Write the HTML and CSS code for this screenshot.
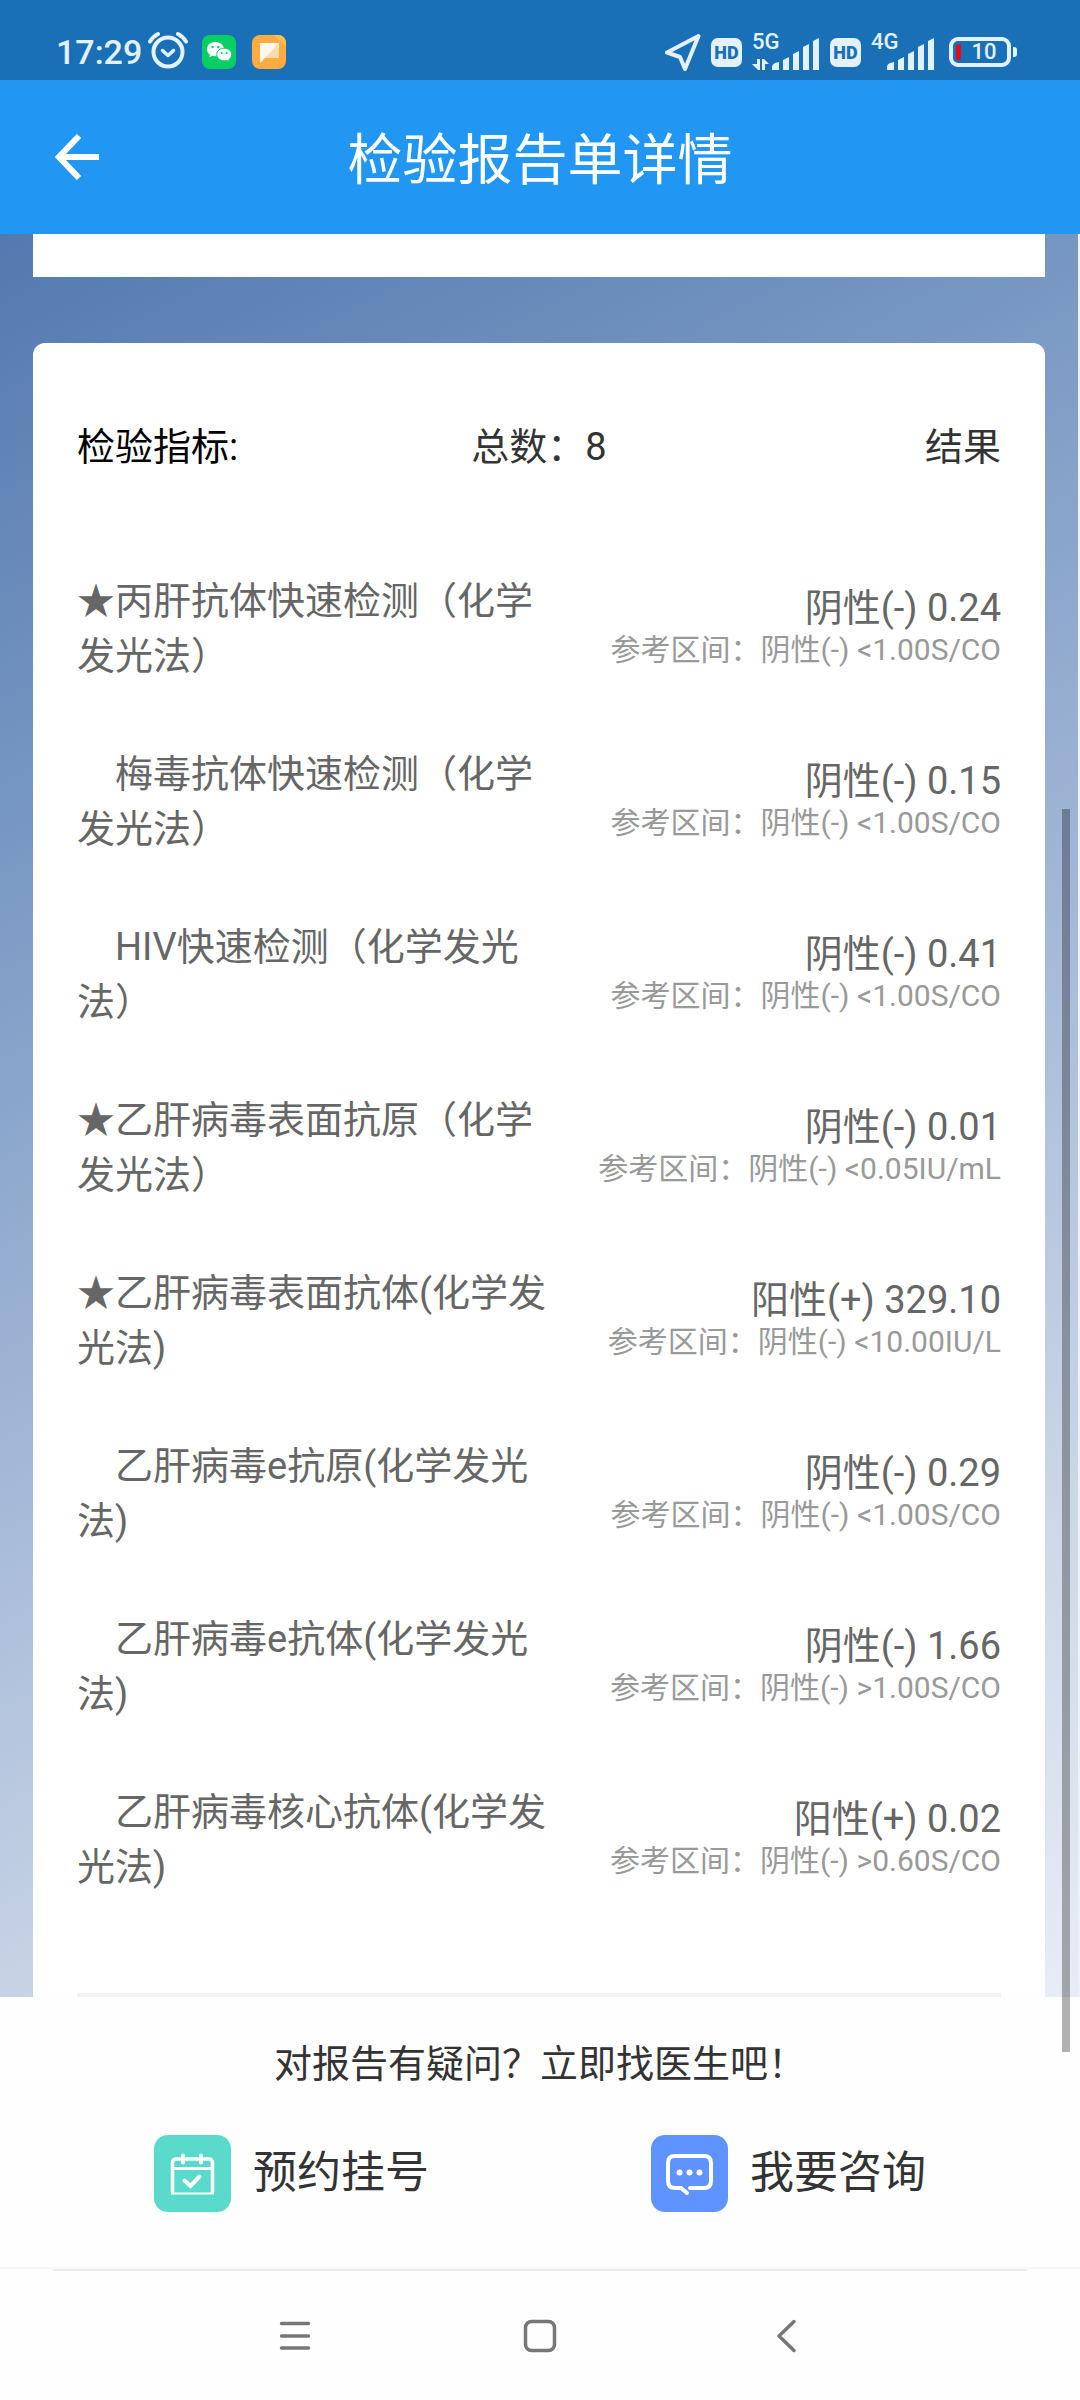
FILE: index.html
```html
<!DOCTYPE html>
<html lang="zh-CN">

<head>
    <meta charset="UTF-8">
    <meta name="viewport" content="width=device-width, initial-scale=1.0">
    <title>检验报告单详情</title>
    <link rel="stylesheet" href="styles.css">
</head>

<body>
    <!-- Status bar -->
    <div class="status-bar">
        <div class="status-left">
            <span class="clock">17:29</span>
            <svg class="alarm" width="40" height="40" viewBox="0 0 40 40" fill="none" stroke="#e3f1fd" stroke-linecap="round">
                <circle cx="20" cy="22" r="14.5" stroke-width="4" />
                <path d="M14.500 20.500l5.500 5 5.500-5" stroke-width="3.500" stroke-linejoin="round" />
                <path d="M2 11.500Q5 6.500 10 4M38 11.500Q35 6.500 30 4" stroke-width="4" />
            </svg>
            <svg class="app-icon" width="34" height="34" viewBox="0 0 34 34">
                <rect width="34" height="34" rx="8" fill="#07cf63" />
                <path d="M13.500 7C8.500 7 5 10.200 5 14.200c0 2.300 1.200 4.200 3 5.500l-.7 2.600 3-1.500c1 .3 2.100.5 3.200.5 4.900 0 8.500-3.100 8.500-7.100S18.400 7 13.500 7z" fill="#fff" />
                <path d="M22.200 13.200c-4.200 0-7.500 2.700-7.500 6.300s3.300 6.300 7.500 6.300c.9 0 1.800-.1 2.600-.4l2.700 1.400-.7-2.300c1.800-1.200 2.900-3 2.900-5 0-3.600-3.300-6.300-7.500-6.300z" fill="#fff" stroke="#07cf63" />
                <g fill="#07cf63">
                    <circle cx="10.600" cy="12" r="1.200" />
                    <circle cx="16.400" cy="12" r="1.200" />
                    <circle cx="19.700" cy="18" r="1" />
                    <circle cx="24.700" cy="18" r="1" />
                </g>
            </svg>
            <svg class="app-icon" width="34" height="34" viewBox="0 0 34 34">
                <rect width="34" height="34" rx="8" fill="#ffab40" />
                <path d="M22 0h4a8 8 0 0 1 8 8v4z" fill="#ffc34d" />
                <path d="M8 8h19v15H13l-5 5z" fill="#ffdcae" />
                <path d="M8 8h19L8 28z" fill="#fff8ee" />
            </svg>
        </div>
        <div class="status-right">
            <svg width="36" height="38" viewBox="0 0 36 38" fill="none" stroke="#e3f1fd" stroke-width="4" stroke-linejoin="round">
                <path d="M33.500 3L2 19.500l13 4.500 5 12z" />
            </svg>
            <span class="hd">HD</span>
            <div class="signal">
                <span class="network">5G</span>
                <svg width="68" height="37" viewBox="0 0 68 37" fill="#e3f1fd">
                    <path d="M5 25h3v11H6l-6-6h5zM10 36V25h2l5 5h-4v6z" />
                    <path d="M20 36v-3q0-4 7-5v8zM31 36V26l6-3v13zM41 36V20l6-3v19zM51 36V13l6-3v26zM61 36V7l6-3v32z" />
                </svg>
            </div>
            <span class="hd">HD</span>
            <div class="signal">
                <span class="network">4G</span>
                <svg width="68" height="37" viewBox="0 0 68 37" fill="#e3f1fd">
                    <path d="M16 36v-3q0-4 7-5v8zM27 36V26l6-3v13zM37 36V20l6-3v19zM47 36V13l6-3v26zM57 36V7l6-3v32z" />
                </svg>
            </div>
            <div class="battery">
                <span class="battery-level"></span>
                <span class="battery-text">10</span>
            </div>
        </div>
    </div>

    <!-- Title bar -->
    <header class="header">
        <button class="back" type="button" aria-label="返回">
            <svg width="44" height="46" viewBox="0 0 44 46" fill="none" stroke="#fff" stroke-width="6">
                <path d="M24 2L4 23l20 21M4 23h40" />
            </svg>
        </button>
        <h1 class="title">检验报告单详情</h1>
    </header>

    <!-- Report -->
    <main class="content">
        <section class="card card-prev"></section>
        <section class="card report">
            <div class="report-head">
                <span class="report-label">检验指标:</span>
                <span>总数：8</span>
                <span>结果</span>
            </div>
            <ul class="items">
                <li class="item">
                    <span class="name">★丙肝抗体快速检测（化学发光法）</span>
                    <div class="value">
                        <span class="result">阴性(-) 0.24</span>
                        <span class="range">参考区间：阴性(-) &lt;1.00S/CO</span>
                    </div>
                </li>
                <li class="item">
                    <span class="name">　梅毒抗体快速检测（化学发光法）</span>
                    <div class="value">
                        <span class="result">阴性(-) 0.15</span>
                        <span class="range">参考区间：阴性(-) &lt;1.00S/CO</span>
                    </div>
                </li>
                <li class="item">
                    <span class="name">　HIV快速检测（化学发光法）</span>
                    <div class="value">
                        <span class="result">阴性(-) 0.41</span>
                        <span class="range">参考区间：阴性(-) &lt;1.00S/CO</span>
                    </div>
                </li>
                <li class="item">
                    <span class="name">★乙肝病毒表面抗原（化学发光法）</span>
                    <div class="value">
                        <span class="result">阴性(-) 0.01</span>
                        <span class="range">参考区间：阴性(-) &lt;0.05IU/mL</span>
                    </div>
                </li>
                <li class="item">
                    <span class="name">★乙肝病毒表面抗体(化学发光法)</span>
                    <div class="value">
                        <span class="result">阳性(+) 329.10</span>
                        <span class="range">参考区间：阴性(-) &lt;10.00IU/L</span>
                    </div>
                </li>
                <li class="item">
                    <span class="name">　乙肝病毒e抗原(化学发光法)</span>
                    <div class="value">
                        <span class="result">阴性(-) 0.29</span>
                        <span class="range">参考区间：阴性(-) &lt;1.00S/CO</span>
                    </div>
                </li>
                <li class="item">
                    <span class="name">　乙肝病毒e抗体(化学发光法)</span>
                    <div class="value">
                        <span class="result">阴性(-) 1.66</span>
                        <span class="range">参考区间：阴性(-) &gt;1.00S/CO</span>
                    </div>
                </li>
                <li class="item">
                    <span class="name">　乙肝病毒核心抗体(化学发光法)</span>
                    <div class="value">
                        <span class="result">阳性(+) 0.02</span>
                        <span class="range">参考区间：阴性(-) &gt;0.60S/CO</span>
                    </div>
                </li>
            </ul>
        </section>
    </main>

    <!-- Ask a doctor -->
    <footer class="footer">
        <p class="question">对报告有疑问？立即找医生吧！</p>
        <div class="actions">
            <button class="action" type="button">
                <svg class="action-icon" width="77" height="77" viewBox="0 0 77 77" fill="none" stroke="#fff">
                    <rect width="77" height="77" rx="14" fill="#5adacb" stroke="none" />
                    <path d="M18.500 58V28q0-4 4-4h32q4 0 4 4v30" stroke-width="3.500" />
                    <path d="M17 58.500h43" stroke-width="2" />
                    <path d="M18 33.500h40" stroke-width="3" />
                    <path d="M29 20.500v7M47 20.500v7" stroke-width="4" stroke-linecap="round" />
                    <path d="M30.500 45.500l6 5.500 9-9.500" stroke-width="4" stroke-linecap="round" />
                </svg>
                <span>预约挂号</span>
            </button>
            <button class="action" type="button">
                <svg class="action-icon" width="77" height="77" viewBox="0 0 77 77" fill="none" stroke="#fff">
                    <rect width="77" height="77" rx="14" fill="#5f93ff" stroke="none" />
                    <path d="M36 58l-6-5h-6q-7 0-7-7V28q0-7 7-7h29q7 0 7 7v18q0 7-7 7H39" stroke-width="4" stroke-linecap="round" />
                    <g fill="#fff" stroke="none">
                        <circle cx="28.500" cy="37.500" r="3" />
                        <circle cx="38.500" cy="37.500" r="3" />
                        <circle cx="48.500" cy="37.500" r="3" />
                    </g>
                </svg>
                <span>我要咨询</span>
            </button>
        </div>
    </footer>

    <!-- System navigation -->
    <nav class="nav-bar">
        <button class="nav-button" type="button" aria-label="菜单">
            <svg width="34" height="34" viewBox="0 0 34 34" fill="none" stroke="#777" stroke-width="3.500" stroke-linecap="round">
                <path d="M3.500 4.500h27M3.500 17h27M3.500 29h27" />
            </svg>
        </button>
        <button class="nav-button" type="button" aria-label="主页">
            <svg width="34" height="34" viewBox="0 0 34 34" fill="none" stroke="#777" stroke-width="3.500">
                <rect x="2.500" y="2.500" width="29" height="29" rx="6" />
            </svg>
        </button>
        <button class="nav-button" type="button" aria-label="后退">
            <svg width="34" height="34" viewBox="0 0 34 34" fill="none" stroke="#777" stroke-width="3.500" stroke-linecap="round" stroke-linejoin="round">
                <path d="M26 2.500L11 17l15 14.500" />
            </svg>
        </button>
    </nav>

    <div class="scrollbar"></div>
</body>

</html>
```
FILE: styles.css
```css
* {
    box-sizing: border-box;
}

body {
    display: flex;
    flex-direction: column;
    position: relative;
    min-height: 100vh;
    margin: 0;
    background-color: #fefefe;
    color: #333;
    font-family: Roboto, "Noto Sans CJK SC", sans-serif;
    font-size: 38px;
    line-height: 55px;
}

button {
    padding: 0;
    border: none;
    background: none;
    color: inherit;
    font: inherit;
    cursor: pointer;
}

svg {
    display: block;
}

/* -- Status bar -- */

.status-bar {
    display: flex;
    justify-content: space-between;
    height: 80px;
    padding: 24px 69px 0 56px;
    background-color: #1a70b7;
    color: #e3f1fd;
}

.status-left,
.status-right {
    display: flex;
    align-items: center;
    height: 56px;
}

.clock {
    font-size: 34px;
    font-weight: 500;
}

.alarm {
    margin: 0 14px 4px 6px;
}

.app-icon {
    margin-right: 16px;
}

.status-right {
    gap: 10px;
}

.hd {
    width: 31px;
    height: 29px;
    border-radius: 7px;
    background-color: #e3f1fd;
    color: #1a70b7;
    font-size: 18px;
    font-weight: 900;
    line-height: 30px;
    text-align: center;
}

.signal {
    position: relative;
}

.network {
    position: absolute;
    left: 0;
    top: 0;
    font-size: 22px;
    font-weight: 500;
    line-height: 16px;
}

.battery {
    display: flex;
    align-items: center;
    position: relative;
    width: 62px;
    height: 30px;
    border: 4px solid #e3f1fd;
    border-radius: 9px;
}

.battery::after {
    content: "";
    position: absolute;
    right: -10px;
    top: 6px;
    width: 4px;
    height: 10px;
    border-radius: 0 3px 3px 0;
    background-color: #e3f1fd;
}

.battery-level {
    width: 5px;
    height: 16px;
    margin-left: 3px;
    border-radius: 2px;
    background-color: #e30b1c;
}

.battery-text {
    flex: 1;
    font-size: 22px;
    font-weight: 500;
    line-height: 22px;
    text-align: center;
}

/* -- Title bar -- */

.header {
    display: grid;
    grid-template-columns: 1fr auto 1fr;
    align-items: center;
    height: 154px;
    padding: 0 55px;
    background-color: #2196f3;
    color: #fff;
}

.back {
    justify-self: start;
}

.title {
    margin: 0;
    padding-top: 6px;
    font-size: 55px;
    font-weight: 400;
    line-height: 80px;
}

/* -- Report -- */

.content {
    padding: 0 33px;
    border-right: 2px solid #eef1f6;
    background-image: linear-gradient(152deg, #5379af, #7898c3 26%, #a5b9d8 54%, #c8d4e5 76%, #e8edf6);
}

.card {
    background-color: #fff;
}

.card-prev {
    height: 43px;
    margin-bottom: 66px;
}

.report {
    padding: 77px 44px 0;
    border-radius: 12px 12px 0 0;
}

.report-head {
    display: grid;
    grid-template-columns: 1fr auto 1fr;
    margin-bottom: 99px;
}

.report-head span:last-child {
    text-align: right;
}

.report-label {
    color: #000;
}

.items {
    margin: 0;
    padding: 0 0 35px;
    border-bottom: 4px solid #f2f2f2;
    list-style: none;
}

.item {
    display: flex;
    align-items: center;
    justify-content: space-between;
    padding-bottom: 63px;
}

.name {
    width: 52%;
    color: #666;
}

.value {
    display: flex;
    flex-direction: column;
    align-items: flex-end;
    line-height: 42px;
}

.result {
    color: #666;
}

.range {
    color: #999;
    font-size: 30px;
}

/* -- Ask a doctor -- */

.footer {
    padding: 40px 43px 55px;
    border-bottom: 2px solid #f6f6f6;
}

.question {
    margin: 0 0 43px;
    text-align: center;
}

.actions {
    display: grid;
    grid-template-columns: 1fr 1fr;
}

.action {
    display: flex;
    align-items: center;
    justify-content: center;
    gap: 22px;
    font-size: 44px;
}

/* -- System navigation -- */

.nav-bar {
    display: flex;
    flex: 1;
    align-items: center;
    justify-content: center;
    margin: 0 53px;
    border-top: 2px solid #ececec;
}

.nav-button {
    display: flex;
    justify-content: center;
    width: 245px;
}

.scrollbar {
    position: absolute;
    right: 10px;
    top: 809px;
    width: 8px;
    height: 1243px;
    background-color: rgba(0, 0, 0, 0.3);
}
```
